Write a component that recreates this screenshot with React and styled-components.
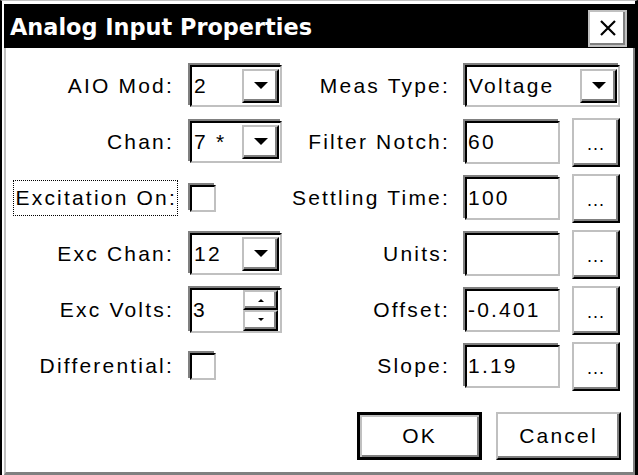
import React from "react";
import styled, { createGlobalStyle, css } from "styled-components";

const Global = createGlobalStyle`
  html, body { margin: 0; padding: 0; background: #fff; }
  body { width: 638px; height: 475px; overflow: hidden; }
`;

const Window = styled.div`
  box-sizing: border-box;
  width: 638px;
  height: 475px;
  background: #fff;
  border-top: 1px solid #c0c0c0;
  border-left: 2px solid #000;
  border-right: 3px solid #000;
  display: flex;
  flex-direction: column;
  font-family: "Liberation Sans", Arial, sans-serif;
  color: #000;
`;

const TitleBar = styled.div`
  margin: 3px 0 0 2px;
  height: 44px;
  background: #000;
  display: flex;
  align-items: center;
  justify-content: space-between;
  padding: 0 8px 0 6px;
`;

const Title = styled.div`
  color: #fff;
  font-family: "DejaVu Sans", Verdana, sans-serif;
  font-weight: bold;
  font-size: 22.4px;
  padding-top: 1px;
`;

const CloseButton = styled.div`
  box-sizing: border-box;
  width: 39px;
  height: 37px;
  margin-top: 4px;
  background: #fff;
  border: 2px solid #c0c0c0;
  box-shadow: inset -2px -2px 0 #808080;
  display: flex;
  align-items: center;
  justify-content: center;
`;

const Body = styled.div`
  flex: 1;
  margin-left: 2px;
  border-left: 2px solid #c0c0c0;
  border-right: 2px solid #808080;
  border-bottom: 3px solid #808080;
  display: flex;
  flex-direction: column;
  padding-top: 10px;
`;

const Grid = styled.div`
  display: grid;
  grid-template-columns: 182px 94px 181px 157px;
  grid-auto-rows: 56px;
  align-items: center;
`;

const textStyle = css`
  font-size: 21px;
  letter-spacing: 2.2px;
  white-space: nowrap;
`;

const Label = styled.div`
  ${textStyle};
  justify-self: end;
  padding-right: ${(p) => p.$pad ?? 14}px;
`;

const FocusLabel = styled(Label)`
  outline: 1px dotted #000;
  outline-offset: 0;
  padding: 5px 0 5px 1px;
  margin-right: 11px;
`;

const sunken = css`
  box-sizing: border-box;
  background: #fff;
  border-style: solid;
  border-width: 2px;
  border-color: #000 #c0c0c0 #c0c0c0 #000;
  box-shadow: -2px -2px 0 #808080;
`;

const raised = css`
  box-sizing: border-box;
  background: #fff;
  border-style: solid;
  border-width: 2px;
  border-color: #c0c0c0 #000 #000 #c0c0c0;
  box-shadow: inset -2px -2px 0 #808080;
`;

const Combo = styled.div`
  ${sunken};
  width: ${(p) => p.$w}px;
  height: 42px;
  margin-left: 2px;
  display: flex;
  align-items: center;
  padding-right: 1px;
`;

const Value = styled.div`
  ${textStyle};
  flex: 1;
  padding-left: ${(p) => p.$pl ?? 2}px;
`;

const DropButton = styled.div`
  ${raised};
  width: 37px;
  height: 34px;
  display: flex;
  align-items: center;
  justify-content: center;
`;

const Check = styled.div`
  ${sunken};
  width: 26px;
  height: 27px;
  margin-left: 2px;
  justify-self: start;
`;

const RightPair = styled.div`
  display: flex;
  align-items: center;
  gap: 12px;
`;

const Edit = styled.div`
  ${sunken};
  width: 95px;
  height: 43px;
  margin-left: 2px;
  display: flex;
  align-items: center;
`;

const DotsButton = styled.div`
  ${raised};
  width: 48px;
  height: 49px;
  display: flex;
  align-items: flex-end;
  justify-content: center;
  font-size: 18px;
  padding-bottom: 10px;
  letter-spacing: 1px;
`;

const Spin = styled.div`
  ${sunken};
  width: 92px;
  height: 45px;
  margin-left: 2px;
  display: flex;
  align-items: stretch;
`;

const SpinField = styled.div`
  flex: 1;
  display: flex;
  align-items: center;
`;

const SpinButtons = styled.div`
  width: 35px;
  margin: 0 2px 0 0;
  display: flex;
  flex-direction: column;
`;

const SpinButton = styled.div`
  ${raised};
  flex: 1;
  display: flex;
  align-items: center;
  justify-content: center;
`;

const ButtonRow = styled.div`
  display: flex;
  justify-content: flex-end;
  gap: 14px;
  padding: 18px 12px 0 0;
`;

const DialogButton = styled.div`
  ${raised};
  ${textStyle};
  width: 125px;
  height: 48px;
  display: flex;
  align-items: center;
  justify-content: center;
  ${(p) =>
    p.$default &&
    css`
      border-color: #000;
      border-width: 3px;
      box-shadow: inset 2px 2px 0 #c0c0c0, inset -2px -2px 0 #808080;
    `}
`;

const DownArrow = () => (
  <svg width="14" height="8" viewBox="0 0 14 8">
    <polygon points="0,0 14,0 7,7" fill="#000" />
  </svg>
);

const SmallArrow = ({ up }) => (
  <svg width="6" height="4" viewBox="0 0 6 4">
    <polygon points={up ? "0,4 6,4 3,1" : "0,0 6,0 3,3"} fill="#000" />
  </svg>
);

const CloseX = () => (
  <svg width="16" height="16" viewBox="0 0 16 16">
    <path d="M1 1 L15 15 M15 1 L1 15" stroke="#000" strokeWidth="2.2" />
  </svg>
);

const ComboBox = ({ value, w = 92 }) => (
  <Combo $w={w}>
    <Value>{value}</Value>
    <DropButton>
      <DownArrow />
    </DropButton>
  </Combo>
);

const EditWithDots = ({ value }) => (
  <RightPair>
    <Edit>
      <Value $pl={1}>{value}</Value>
    </Edit>
    <DotsButton>...</DotsButton>
  </RightPair>
);

export default function App() {
  return (
    <>
      <Global />
      <Window>
        <TitleBar>
          <Title>Analog Input Properties</Title>
          <CloseButton>
            <CloseX />
          </CloseButton>
        </TitleBar>
        <Body>
          <Grid>
            <Label>AIO Mod:</Label>
            <ComboBox value="2" />
            <Label $pad={13}>Meas Type:</Label>
            <ComboBox value="Voltage" w={155} />

            <Label>Chan:</Label>
            <ComboBox value="7 *" />
            <Label $pad={13}>Filter Notch:</Label>
            <EditWithDots value="60" />

            <FocusLabel>Excitation On:</FocusLabel>
            <Check />
            <Label $pad={13}>Settling Time:</Label>
            <EditWithDots value="100" />

            <Label>Exc Chan:</Label>
            <ComboBox value="12" />
            <Label $pad={13}>Units:</Label>
            <EditWithDots value="" />

            <Label>Exc Volts:</Label>
            <Spin>
              <SpinField>
                <Value $pl={1}>3</Value>
              </SpinField>
              <SpinButtons>
                <SpinButton>
                  <SmallArrow up />
                </SpinButton>
                <SpinButton>
                  <SmallArrow />
                </SpinButton>
              </SpinButtons>
            </Spin>
            <Label $pad={13}>Offset:</Label>
            <EditWithDots value="-0.401" />

            <Label>Differential:</Label>
            <Check />
            <Label $pad={13}>Slope:</Label>
            <EditWithDots value="1.19" />
          </Grid>
          <ButtonRow>
            <DialogButton $default>OK</DialogButton>
            <DialogButton>Cancel</DialogButton>
          </ButtonRow>
        </Body>
      </Window>
    </>
  );
}
